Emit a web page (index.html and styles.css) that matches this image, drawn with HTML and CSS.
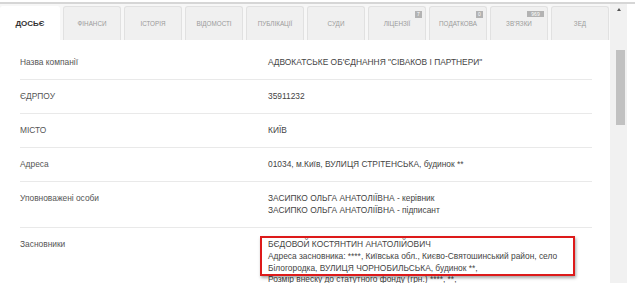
FILE: index.html
```html
<!DOCTYPE html>
<html lang="uk">
<head>
  <meta charset="UTF-8">
  <title>Досьє компанії</title>
  <link rel="stylesheet" href="styles.css">
</head>
<body>
  <div id="frame">
    <div id="panel">
      <div id="tabs">
        <div class="tab active">ДОСЬЄ</div>
        <div class="tab">ФІНАНСИ</div>
        <div class="tab">ІСТОРІЯ</div>
        <div class="tab">ВІДОМОСТІ</div>
        <div class="tab">ПУБЛІКАЦІЇ</div>
        <div class="tab">СУДИ</div>
        <div class="tab">ЛІЦЕНЗІЇ<span class="badge">7</span></div>
        <div class="tab">ПОДАТКОВА<span class="badge">0</span></div>
        <div class="tab">ЗВ'ЯЗКИ<span class="badge wide">969</span></div>
        <div class="tab">ЗЕД</div>
      </div>
      <div id="content">
        <div class="row">
          <div class="label">Назва компанії</div>
          <div class="value">АДВОКАТСЬКЕ ОБ'ЄДНАННЯ "СІВАКОВ І ПАРТНЕРИ"</div>
        </div>
        <div class="row">
          <div class="label">ЄДРПОУ</div>
          <div class="value">35911232</div>
        </div>
        <div class="row">
          <div class="label">МІСТО</div>
          <div class="value">КИЇВ</div>
        </div>
        <div class="row">
          <div class="label">Адреса</div>
          <div class="value">01034, м.Київ, ВУЛИЦЯ СТРІТЕНСЬКА, будинок **</div>
        </div>
        <div class="row">
          <div class="label">Уповноважені особи</div>
          <div class="value">
            <div>ЗАСИПКО ОЛЬГА АНАТОЛІЇВНА - керівник</div>
            <div>ЗАСИПКО ОЛЬГА АНАТОЛІЇВНА - підписант</div>
          </div>
        </div>
        <div class="row last">
          <div class="label">Засновники</div>
          <div class="value">
            <div class="marked">
              <div>БЄДОВОЙ КОСТЯНТИН АНАТОЛІЙОВИЧ</div>
              <div>Адреса засновника: ****, Київська обл., Києво-Святошинський район, село</div>
              <div>Білогородка, ВУЛИЦЯ ЧОРНОБИЛЬСЬКА, будинок **,</div>
            </div>
            <div class="under">Розмір внеску до статутного фонду (грн.) ****, **,</div>
          </div>
        </div>
      </div>
    </div>
    <div id="scrollbar">
      <div class="arrow"></div>
      <div class="thumb"></div>
    </div>
  </div>
</body>
</html>
```

FILE: styles.css
```css
body {
  margin: 0;
  background: #fff;
  font-family: "Liberation Sans", Arial, sans-serif;
  color: #444;
}
#frame {
  display: flex;
  margin-top: 2px;
  border-top: 2px solid #d6d6d6;
  height: 279px;
  overflow: hidden;
}
#panel {
  width: 610px;
  background: #f7f7f7;
  overflow: hidden;
}
#tabs {
  display: flex;
  gap: 3px;
  padding-top: 2px;
  height: 34px;
}
.tab {
  position: relative;
  width: 58px;
  height: 34px;
  box-sizing: border-box;
  flex: none;
  background: #f0f0f0;
  border: 1px solid #e1e1e1;
  border-bottom: none;
  border-radius: 3px 3px 0 0;
  color: #9a9a9a;
  font-size: 6.3px;
  display: flex;
  align-items: center;
  justify-content: center;
}
.tab.active {
  width: 60px;
  background: #fff;
  border-color: #fff;
  color: #333;
  font-size: 8px;
  font-weight: bold;
}
.badge {
  position: absolute;
  top: 4px;
  right: 3px;
  min-width: 7px;
  height: 7px;
  padding: 0 1px;
  box-sizing: border-box;
  background: #b3b3b3;
  color: #fff;
  font-size: 5px;
  line-height: 7px;
  text-align: center;
}
.badge.wide {
  width: 17px;
  height: 6px;
  line-height: 6px;
}
#content {
  background: #fff;
  padding: 6px 18px 0 20px;
  height: 300px;
}
.row {
  display: flex;
  padding: 10px 0 11px;
  border-bottom: 1px solid #e9e9e9;
  font-size: 8.4px;
  line-height: 12px;
}
.row.last {
  border-bottom: none;
}
.label {
  width: 248px;
  flex: none;
  color: #555;
}
.value {
  color: #444;
  white-space: nowrap;
}
.marked {
  position: relative;
  z-index: 2;
  width: 315px;
  box-sizing: border-box;
  margin: -2px 0 0 -8px;
  padding: 0 6px;
  border: 2px solid #dd1a1a;
  box-shadow: 1px 2px 3px rgba(0, 0, 0, 0.35);
}
.under {
  margin-top: -3px;
}
#scrollbar {
  width: 17px;
  flex: none;
  background: #f1f1f1;
  position: relative;
}
#scrollbar .arrow {
  position: absolute;
  top: 4px;
  left: 7px;
  width: 0;
  height: 0;
  border-left: 2px solid transparent;
  border-right: 2px solid transparent;
  border-bottom: 3px solid #555;
}
#scrollbar .thumb {
  position: absolute;
  top: 46px;
  left: 6px;
  width: 9px;
  height: 75px;
  background: #c1c1c1;
}
```
